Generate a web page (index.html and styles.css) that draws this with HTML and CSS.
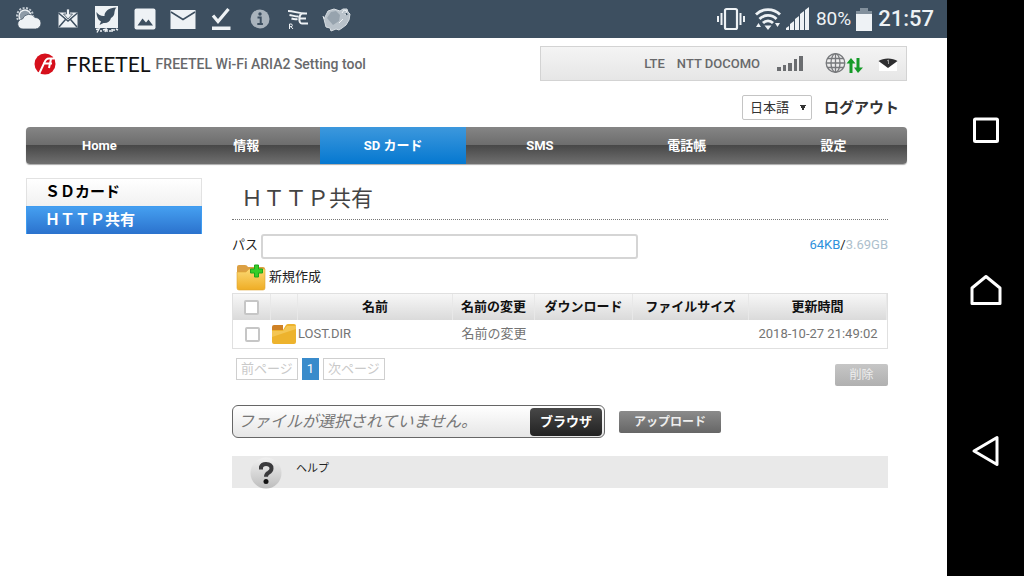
FILE: index.html
```html
<!DOCTYPE html>
<html lang="ja">
<head>
<meta charset="utf-8">
<meta name="viewport" content="width=device-width, initial-scale=1">
<title>FREETEL Wi-Fi ARIA2 Setting tool</title>
<link rel="stylesheet" href="styles.css">
</head>
<body>
<div class="device">
  <div class="screen">
    <div class="statusbar">
      <div class="notifications">
        <svg width="28" height="28" viewBox="0 0 28 28"><circle cx="10" cy="11" r="8" fill="none" stroke="#c3ccd4" stroke-width="2" stroke-dasharray="2 1.5"/><circle cx="10" cy="11" r="6" fill="#8e9ba7" stroke="#eef2f5" stroke-width="1.4"/><path d="M8 24a5 5 0 0 1-.5-10 7 7 0 0 1 12.500-1.500A5.700 5.700 0 1 1 20.500 24z" fill="#eef2f5" stroke="#3d4f60" stroke-width=".8"/></svg>
        <svg width="28" height="28" viewBox="0 0 28 28"><path d="M4.500 7.500h19v15h-19z" fill="#eef2f5"/><path d="M4.500 8l9.500 8 9.500-8M5 22l6.500-7.500M23 22l-6.500-7.500" fill="none" stroke="#3d4f60" stroke-width="1.500"/><path d="M12.500 4h3v5h3L14 14 9.500 9h3z" fill="#eef2f5" stroke="#3d4f60" stroke-width=".8"/></svg>
        <svg width="28" height="28" viewBox="0 0 28 28"><path d="M3 1h23v22H3z" fill="#eef2f5"/><path d="M4.500 7c2 3 5 4.500 8 4 0-4 3-6.500 6-7.500 2-.8 4-1 6-1-1.500 1.200-1.500 2.500-2 4.500 0 3-1.500 5-3.500 6-1 4-4 5.500-7.500 5l-4 2 1.500-3.500C6 15 4.500 11 4.500 7z" fill="#3d4f60"/><path d="M4 24.500l3-.5-2 3.500M8 26h2M11 25l3-1-1 3M15 24v3M17 26h2M20 24v3M20 25h3M24 24l2 1" fill="none" stroke="#eef2f5" stroke-width="1.400"/></svg>
        <svg width="28" height="28" viewBox="0 0 28 28"><rect x="3.500" y="3.500" width="21" height="21" rx="2" fill="#eef2f5"/><path d="M6.500 20.500l5-7 3.500 4 2.500-3 4.500 6z" fill="#3d4f60"/></svg>
        <svg width="28" height="28" viewBox="0 0 28 28"><path d="M1.500 5h25v19h-25z" fill="#eef2f5"/><path d="M2 7l12 7.500L26 7" fill="none" stroke="#3d4f60" stroke-width="1.500"/></svg>
        <svg width="28" height="28" viewBox="0 0 28 28"><path d="M6 10.500l5 6L21.500 4" fill="none" stroke="#eef2f5" stroke-width="3.200"/><path d="M5 21.500h18.500V25H5z" fill="#eef2f5"/></svg>
        <svg width="28" height="28" viewBox="0 0 28 28"><circle cx="14" cy="14" r="9.500" fill="#a9b3bc"/><circle cx="14" cy="9" r="1.700" fill="#3d4f60"/><path d="M11.500 12.500h3.200v6.500M11.300 19h5.600" fill="none" stroke="#3d4f60" stroke-width="2"/></svg>
        <svg width="28" height="28" viewBox="0 0 28 28"><path d="M4 6c6 0 10 2.500 18 2.500M5.500 10c3 .5 6 1.500 9 1.500M7.500 13.500c2.500 .8 4 1 6 .5M23 8.500h-5c-3 1-4 10 0 10h6M15 13.500h7" fill="none" stroke="#eef2f5" stroke-width="2"/><path d="M5.500 24v-5h1.500a1.300 1.300 0 0 1 0 2.700H5.500M7 21.700l2 2.300" fill="none" stroke="#eef2f5"/></svg>
        <svg width="30" height="28" viewBox="0 0 30 28"><path d="M2 14L6 6l6-2 6 2 3-2h4l1 3 2 2-1 6-3 5-4 3-3 2-3-1-5 2-1-3-4-1z" fill="#b9c2ca" stroke="#d7dde2"/><path d="M5 13l4-6 5-1 4 4-1 6-6 4z" fill="#97a3ae"/><path d="M20 8l2-3 3 1-2 4M2 14l-1-3M17 18l4-4" fill="none" stroke="#eef2f5"/><path d="M24 8l1 2" stroke="#3d4f60" stroke-width="1.500"/></svg>
      </div>
      <div class="system">
        <svg width="30" height="24" viewBox="0 0 30 24"><rect x="9" y="2" width="12" height="20" rx="1.500" fill="none" stroke="#eef2f5" stroke-width="2.200"/><path d="M5.500 6v12M24.500 6v12M2 9v6M28 9v6" stroke="#eef2f5" stroke-width="2"/></svg>
        <svg class="wifi" width="28" height="24" viewBox="0 0 28 24"><path d="M2 7.500a17 17 0 0 1 24 0M5.500 12a12 12 0 0 1 17 0M9 16a7 7 0 0 1 10 0" fill="none" stroke="#eef2f5" stroke-width="2.800"/><path d="M10.500 18.500h7L14 23zM2 20l2.500-4L7 20zM21 16h5l-2.500 4z" fill="#eef2f5"/></svg>
        <svg width="23" height="24" viewBox="0 0 23 24"><path d="M0 23v-2l3-2v4zM4 23v-6l4-3v9zM9 23V12l4-3v14zM14 23V7l4-3v19zM19 23V3l4-3v23z" fill="#eef2f5"/></svg>
        <span class="battery-level">80%</span>
        <svg width="16" height="24" viewBox="0 0 16 24"><path d="M4 1h8v3h4v3H0V4h4z" fill="#82909c"/><path d="M0 7h16v17H0z" fill="#eef2f5"/></svg>
        <time class="clock">21:57</time>
      </div>
    </div>

    <div class="page">
      <header class="masthead">
        <div class="brand">
          <svg width="22" height="22" viewBox="0 0 22 22"><circle cx="11" cy="11" r="10.500" fill="#d6101c"/><path d="M20 5.500h-5c-3 0-4 2-5 5L5 21M18 10.500H9M17 6l-2 9" fill="none" stroke="#fff" stroke-width="2"/><path d="M2 15c4-1 5-5 7-8" fill="none" stroke="#d6101c" stroke-width="2"/></svg>
          <span class="wordmark">FREETEL</span>
          <span class="tagline">FREETEL Wi-Fi ARIA2 Setting tool</span>
        </div>
        <div class="network">
          <span>LTE</span>
          <span>NTT DOCOMO</span>
          <svg class="bars" width="27" height="16" viewBox="0 0 27 16"><path d="M0 11h4v4H0zM6 9h3v6H6zM11 7h4v8h-4zM17 3h3v12h-3zM22 0h4v15h-4z" fill="#6b6d70"/></svg>
          <svg class="globe" width="38" height="22" viewBox="0 0 38 22"><g fill="none" stroke="#77797c" stroke-width="1.300"><circle cx="10.500" cy="10" r="9.300"/><ellipse cx="10.500" cy="10" rx="4.500" ry="9.300"/><path d="M10.500 1v18M1 10h19M2.500 5.500h16M2.500 14.500h16"/></g><path d="M26 5l4.500 5.500H27.500V20h-3v-9.500h-3zM33 20l-4-5.500h2.500V5h3v9.500H38z" fill="#149a27"/></svg>
          <svg width="20" height="14" viewBox="0 0 20 14"><path d="M1 5h18v9H1z" fill="#fff"/><path d="M.500 4C5 .5 15 .5 19.500 4L10 11z" fill="#2e2e30"/><path d="M9 4l1.500-1v4" fill="none" stroke="#999"/></svg>
        </div>
      </header>
      <div class="session">
        <select class="language" aria-label="言語"><option>日本語</option></select>
        <a class="logout" href="#logout">ログアウト</a>
      </div>
      <nav class="mainnav">
        <a href="#home">Home</a>
        <a href="#info">情報</a>
        <a class="active" href="#sd">SD カード</a>
        <a href="#sms">SMS</a>
        <a href="#phonebook">電話帳</a>
        <a href="#settings">設定</a>
      </nav>
      <div class="columns">
        <nav class="sidenav">
          <a href="#sdcard">ＳＤカード</a>
          <a class="active" href="#http">ＨＴＴＰ共有</a>
        </nav>
        <main class="content">
          <h1>ＨＴＴＰ共有</h1>
          <div class="pathrow">
            <label for="path">パス</label>
            <input id="path" class="path" type="text">
            <span class="usage"><span class="used">64KB</span>/<span class="total">3.69GB</span></span>
          </div>
          <button class="newfolder" type="button">
            <svg width="31" height="28" viewBox="0 0 31 28"><defs><linearGradient id="fold" x1="0" y1="0" x2="0" y2="1"><stop offset="0" stop-color="#fbd873"/><stop offset="1" stop-color="#efad25"/></linearGradient></defs><path d="M1 4q0-2 2-2h6q2 0 3 2h15q2 0 2 2v9H1z" fill="#dca043"/><path d="M1 9h9l3-3h16v19q0 2-2 2H3q-2 0-2-2z" fill="url(#fold)" stroke="#dfa431" stroke-width=".6"/><path d="M18.500 2h4v4h4v4h-4v4h-4v-4h-4V6h4z" fill="#35ce28" stroke="#1fa51c"/></svg>
            <span>新規作成</span>
          </button>
          <table class="files">
            <colgroup><col class="c-check"><col class="c-icon"><col class="c-name"><col class="c-rename"><col class="c-download"><col class="c-size"><col class="c-time"></colgroup>
            <thead>
              <tr><th><input type="checkbox" aria-label="すべて選択"></th><th></th><th>名前</th><th>名前の変更</th><th>ダウンロード</th><th>ファイルサイズ</th><th>更新時間</th></tr>
            </thead>
            <tbody>
              <tr><td><input type="checkbox" aria-label="LOST.DIR"></td><td><svg width="26" height="22" viewBox="0 0 26 22"><path d="M1 4q0-2 2-2h9v8H1z" fill="#cf8125"/><path d="M1 7h11l3-5q1-1 2-1h6q2 0 2 2v16q0 2-2 2H3q-2 0-2-2z" fill="#edb32d"/><path d="M1 8h11l4-5h9v3L1 14z" fill="#f4c653"/></svg></td><td class="name">LOST.DIR</td><td>名前の変更</td><td></td><td></td><td>2018-10-27 21:49:02</td></tr>
            </tbody>
          </table>
          <div class="actions">
            <div class="pager">
              <button type="button">前ページ</button>
              <button class="current" type="button">1</button>
              <button type="button">次ページ</button>
            </div>
            <button class="delete" type="button">削除</button>
          </div>
          <div class="upload">
            <div class="picker">
              <span class="filename">ファイルが選択されていません。</span>
              <button class="browse" type="button">ブラウザ</button>
            </div>
            <button class="send" type="button">アップロード</button>
          </div>
          <a class="help" href="#help">
            <svg width="32" height="32" viewBox="0 0 32 32"><defs><linearGradient id="ball" x1="0" y1="0" x2="0" y2="1"><stop offset="0" stop-color="#f1f1f1"/><stop offset="1" stop-color="#bdbdbd"/></linearGradient></defs><circle cx="16" cy="16" r="15.500" fill="url(#ball)"/><path d="M11 12.500V10q1-3 5-3 5.500 0 5.500 4.500 0 2.500-3 4.200-2.500 1.300-2.500 4" fill="none" stroke="#3a3a3c" stroke-width="4"/><circle cx="16" cy="24.500" r="2.500" fill="#111"/></svg>
            <span>ヘルプ</span>
          </a>
        </main>
      </div>
    </div>
  </div>
  <div class="softkeys">
    <button type="button" aria-label="履歴"><svg width="32" height="32" viewBox="0 0 32 32"><rect x="4.500" y="4" width="23" height="22.500" rx="1"/></svg></button>
    <button type="button" aria-label="ホーム"><svg width="32" height="32" viewBox="0 0 32 32"><path d="M2 13L16 1.500 30 13v15.500H2z"/></svg></button>
    <button type="button" aria-label="戻る"><svg width="32" height="32" viewBox="0 0 32 32"><path d="M27 2.500v27L4 16z"/></svg></button>
  </div>
</div>
</body>
</html>
```
FILE: styles.css
```css
* {
  box-sizing: border-box;
}

body {
  margin: 0;
  background: #fff;
  color: #222;
  font: 13px/18px Roboto, "Noto Sans CJK JP", sans-serif;
}

button,
input,
select {
  margin: 0;
  font: inherit;
}

button {
  padding: 0;
  border: 0;
  background: none;
}

a {
  color: inherit;
  text-decoration: none;
}

svg {
  display: block;
  flex: none;
}

.device {
  display: grid;
  grid-template-columns: 1fr 77px;
  min-height: 100vh;
}

.statusbar {
  display: flex;
  justify-content: space-between;
  align-items: center;
  height: 38px;
  padding: 0 13px 0 10px;
  background: #3d4f60;
}

.notifications {
  display: grid;
  grid-template-columns: repeat(9, 1fr);
  width: 346px;
  align-items: center;
  justify-items: center;
}

.system {
  display: flex;
  align-items: center;
  color: #eef2f5;
}

.wifi {
  margin: 0 4px 0 8px;
}

.battery-level {
  margin: 0 5px 0 7px;
  font-size: 19px;
}

.clock {
  margin-left: 6px;
  font-size: 22px;
  font-weight: 500;
}

.page {
  padding: 8px 40px 24px 26px;
}

.masthead {
  display: flex;
  justify-content: space-between;
}

.brand {
  display: flex;
  align-items: center;
  padding-left: 8px;
}

.wordmark {
  margin: 0 5px 0 10px;
  color: #111;
  font: 21px/24px Lato, sans-serif;
}

.tagline {
  color: #68696b;
  font-size: 14px;
  font-weight: 500;
}

.network {
  display: flex;
  flex: 0 1 367px;
  align-items: center;
  justify-content: flex-end;
  height: 35px;
  padding-right: 8px;
  border: 1px solid #d3d3d3;
  background: linear-gradient(#f4f4f4, #e6e6e6);
  color: #68696b;
  font-weight: 500;
}

.network span {
  margin-left: 12px;
}

.bars {
  margin-left: 17px;
}

.globe {
  margin: 0 15px 0 21px;
}

.session {
  display: flex;
  align-items: center;
  justify-content: flex-end;
  gap: 12px;
  padding: 14px 8px 7px 0;
}

.language {
  appearance: none;
  width: 70px;
  height: 25px;
  padding: 0 7px;
  border: 1px solid #c4c4c4;
  border-radius: 2px;
  background: linear-gradient(to bottom right, #333 50%, transparent 50%) 60px 9px / 3px 6px no-repeat,
    linear-gradient(to bottom left, #333 50%, transparent 50%) 57px 9px / 3px 6px no-repeat, #fff;
  color: #333;
}

.logout {
  color: #333;
  font-size: 15px;
  font-weight: 700;
}

.mainnav {
  display: grid;
  grid-template-columns: repeat(6, 1fr);
  overflow: hidden;
  border-radius: 4px;
  background: linear-gradient(#858585, #6c6c6c 50%, #484848 50%, #707070);
  box-shadow: 0 1px 1px #aaa;
}

.mainnav a {
  height: 37px;
  color: #fff;
  font-weight: 700;
  line-height: 37px;
  text-align: center;
}

.mainnav .active {
  background: linear-gradient(#3d98dd, #0578d0);
}

.columns {
  display: grid;
  grid-template-columns: 176px 1fr;
  gap: 30px;
  padding: 14px 19px 0 0;
}

.sidenav a {
  display: block;
  height: 28px;
  padding-left: 18px;
  border: 1px solid #e2e2e2;
  border-bottom: 0;
  background: linear-gradient(#fff, #f1f1f1);
  color: #000;
  font-size: 15px;
  font-weight: 700;
  line-height: 26px;
}

.sidenav .active {
  border-color: #3f9cf0;
  background: linear-gradient(#459ff0, #2b72cd);
  color: #fff;
}

h1 {
  margin: 0 0 14px;
  padding: 5px 0 4px 9px;
  border-bottom: 1px dotted #777;
  color: #444;
  font-size: 22px;
  font-weight: 400;
  line-height: 32px;
}

.pathrow {
  display: flex;
  gap: 3px;
  line-height: 22px;
}

.path {
  flex: 0 1 377px;
  height: 25px;
  border: 2px solid #d5d5d5;
  border-radius: 3px;
}

.usage {
  margin-left: auto;
}

.used {
  color: #2d91dc;
}

.total {
  color: #adbfcd;
}

.newfolder {
  display: flex;
  align-items: center;
  gap: 2px;
  padding: 4px 0 2px 4px;
  color: #222;
}

.files {
  width: 100%;
  border: 1px solid #e0e0e0;
  border-collapse: separate;
  border-spacing: 0;
  table-layout: fixed;
}

.c-check { width: 38px; }
.c-icon { width: 27px; }
.c-rename { width: 82px; }
.c-download { width: 98px; }
.c-size { width: 116px; }
.c-time { width: 138px; }

.files th {
  height: 26px;
  padding: 0;
  border-right: 1px solid #e8e8e8;
  background: linear-gradient(#f7f7f7, #dadada);
  color: #111;
  font-weight: 700;
}

.files td {
  height: 28px;
  padding: 0;
  color: #747474;
  text-align: center;
}

.files .name {
  text-align: left;
}

.files input,
.path {
  appearance: none;
  background: #fff;
}

.files input {
  width: 15px;
  height: 15px;
  border: 2px solid #c6c6c6;
  border-radius: 2px;
  vertical-align: middle;
}

.actions {
  display: flex;
  align-items: flex-end;
  justify-content: space-between;
  padding: 9px 0 19px 4px;
}

.pager {
  display: flex;
  gap: 4px;
  margin-bottom: 6px;
}

.pager button {
  height: 22px;
  padding: 0 4px;
  border: 1px solid #cfcfcf;
  color: #c9c9c9;
  line-height: 20px;
}

.pager .current {
  border-color: #398bcb;
  background: #398bcb;
  color: #fff;
}

.delete {
  width: 53px;
  height: 22px;
  border-radius: 2px;
  background: linear-gradient(#c6c6c6, #b0b0b0);
  color: #eee;
  font-size: 12px;
}

.upload {
  display: flex;
  align-items: center;
  gap: 14px;
  margin-bottom: 18px;
}

.picker {
  display: flex;
  flex: 0 1 373px;
  align-items: center;
  justify-content: space-between;
  height: 33px;
  padding: 0 2px 0 5px;
  border: 1px solid #666;
  border-radius: 6px;
  background: linear-gradient(#fff, #e6e6e6);
}

.filename {
  color: #777;
  font-size: 16px;
  font-style: italic;
}

.browse {
  width: 72px;
  height: 28px;
  border-radius: 4px;
  background: linear-gradient(#484848, #222);
  color: #fff;
  font-weight: 700;
}

.send {
  width: 102px;
  height: 22px;
  border-radius: 2px;
  background: linear-gradient(#8b8b8b, #666);
  color: #eee;
  font-size: 12px;
  font-weight: 700;
}

.help {
  display: flex;
  gap: 14px;
  height: 32px;
  padding: 1px 18px 0;
  background: #e9e9e9;
  font-size: 11px;
  line-height: 24px;
}

.softkeys {
  display: flex;
  flex-direction: column;
  align-items: center;
  justify-content: center;
  gap: 128px;
  padding-top: 6px;
  background: #000;
}

.softkeys svg {
  fill: none;
  stroke: #fff;
  stroke-width: 3;
  stroke-linejoin: round;
}
```
